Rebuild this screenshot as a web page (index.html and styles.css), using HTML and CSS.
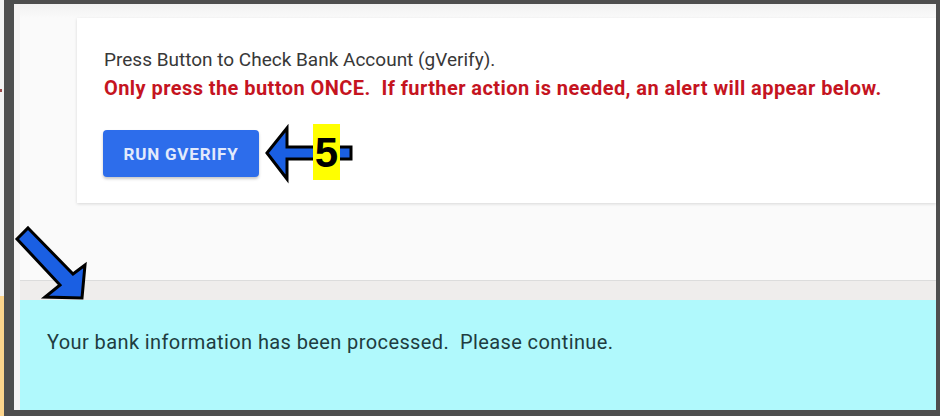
FILE: index.html
```html
<!DOCTYPE html>
<html lang="en">
<head>
<meta charset="utf-8">
<title>gVerify</title>
<link rel="stylesheet" href="styles.css">
</head>
<body>
<div class="screen">
  <div class="edge">
    <div class="edge-top"><span class="dot"></span></div>
    <div class="edge-bottom"></div>
  </div>
  <div class="frame">
    <div class="main">
      <section class="panel">
        <div class="card">
          <p class="intro">Press Button to Check Bank Account (gVerify).</p>
          <p class="warn">Only press the button ONCE.&nbsp; If further action is needed, an alert will appear below.</p>
          <button class="btn" type="button">RUN GVERIFY</button>
        </div>
      </section>
      <div class="band"></div>
      <div class="alert">Your bank information has been processed.&nbsp; Please continue.</div>
    </div>
  </div>
  <svg class="annot" width="940" height="416" viewBox="0 0 940 416" aria-hidden="true">
    <polygon points="267,153 287,128 287,147 351,147 351,159 287,159 287,179" fill="#1a5fe3" stroke="#000" stroke-width="3" stroke-linejoin="miter"/>
    <rect x="313" y="124" width="27" height="56" fill="#ffff00"/>
    <text x="326.5" y="167" text-anchor="middle" class="num">5</text>
    <polygon points="28,228 73,274 85,265 82,298 45,297 60,285 17,239" fill="#1a5fe3" stroke="#000" stroke-width="3" stroke-linejoin="miter"/>
  </svg>
</div>
</body>
</html>
```
FILE: styles.css
```css
html, body {
  margin: 0;
  padding: 0;
}
body {
  width: 940px;
  height: 416px;
  overflow: hidden;
  background: #f3f3f3;
  font-family: Roboto, "Liberation Sans", Arial, sans-serif;
}
.screen {
  position: relative;
  display: flex;
  width: 940px;
  height: 416px;
}
.edge {
  width: 4px;
  display: flex;
  flex-direction: column;
}
.edge-top {
  height: 296px;
  background: #f2f2f2;
  display: flex;
  flex-direction: column;
  padding-top: 89px;
  box-sizing: border-box;
}
.dot {
  width: 2px;
  height: 3px;
  background: #9a4a4a;
}
.edge-bottom {
  flex: 1;
  background: #fdd58c;
}
.frame {
  flex: 1;
  box-sizing: border-box;
  border-style: solid;
  border-color: #4e4e4e;
  border-width: 4px 4px 6px 10px;
  background: #f6f3f3;
  padding-left: 6px;
  display: flex;
}
.main {
  flex: 1;
  display: flex;
  flex-direction: column;
  min-width: 0;
}
.panel {
  background: linear-gradient(#f1f1f1, #fafafa 14px);
  padding: 14px 0 77px 57px;
  border-bottom: 1px solid #dcdcdc;
}
.card {
  background: #fff;
  padding: 27px 0 26px 27px;
  box-shadow: 0 1px 3px rgba(0, 0, 0, 0.14);
  height: 185px;
  box-sizing: border-box;
}
.intro, .warn {
  margin: 0;
  line-height: 29px;
  white-space: nowrap;
}
.intro {
  font-size: 19px;
  color: #383838;
}
.warn {
  font-size: 20px;
  color: #c5141f;
  font-weight: 700;
  letter-spacing: 0.43px;
}
.btn {
  margin-top: 27px;
  margin-left: -1px;
  width: 156px;
  height: 47px;
  border: 0;
  border-radius: 4px;
  background: #2d6deb;
  color: #e2eafc;
  font-family: Roboto, "Liberation Sans", Arial, sans-serif;
  font-weight: 700;
  font-size: 17px;
  letter-spacing: 0.8px;
  box-shadow: 0 2px 3px rgba(0, 0, 0, 0.22);
  padding: 0;
  display: block;
}
.band {
  height: 19px;
  background: #efedec;
}
.alert {
  flex: 1;
  background: #b0f9fc;
  padding: 30px 0 0 27px;
  font-size: 20px;
  line-height: 24px;
  color: #203c40;
  white-space: nowrap;
  letter-spacing: 0.4px;
}
.annot {
  position: absolute;
  left: 0;
  top: 0;
  pointer-events: none;
}
.num {
  font-family: "Liberation Sans", Arial, sans-serif;
  font-weight: 700;
  font-size: 42px;
  fill: #000;
}
```
